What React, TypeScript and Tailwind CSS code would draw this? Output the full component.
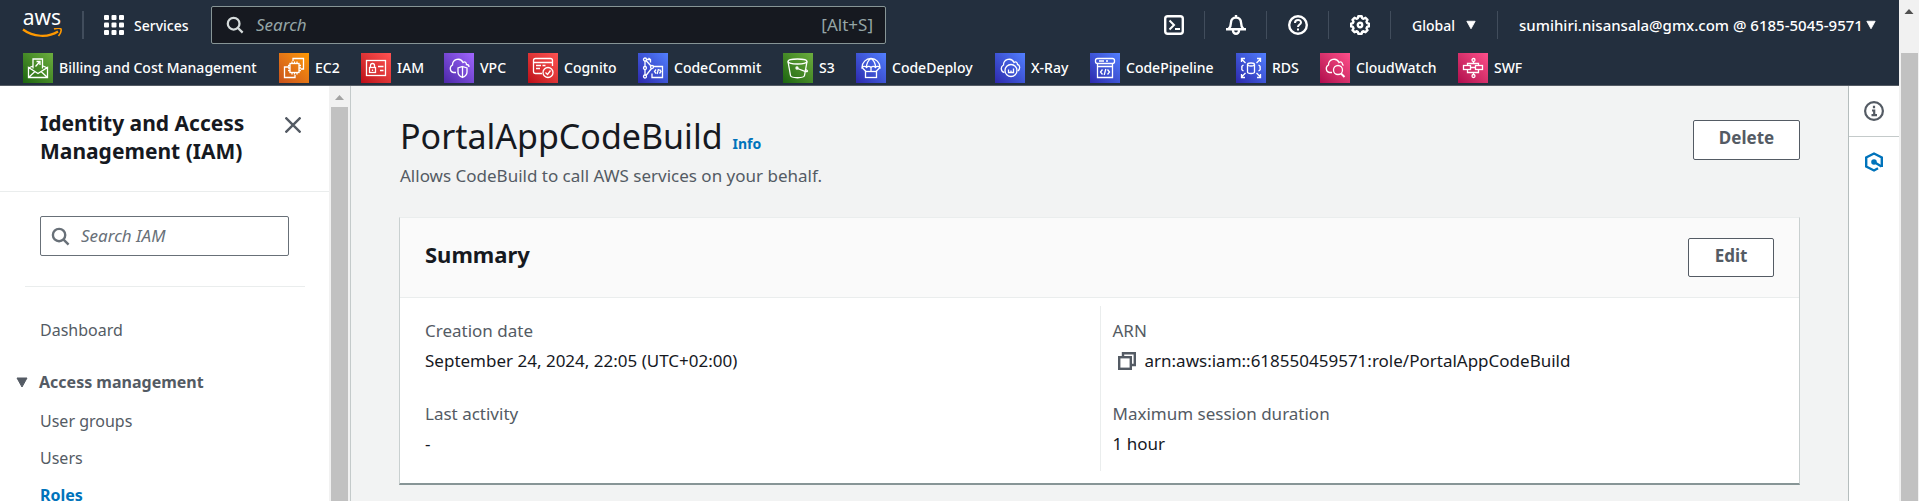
import type { ReactNode } from 'react';

type Service = { name: string; tile: string; width: string; glyph: ReactNode };

const GREEN = 'bg-linear-to-tr from-[#1b660f] to-[#6cae3e]';
const ORANGE = 'bg-linear-to-tr from-[#c8511b] to-[#ff9900]';
const RED = 'bg-linear-to-tr from-[#bd0816] to-[#ff5252]';
const PURPLE = 'bg-linear-to-tr from-[#4d27a8] to-[#a166ff]';
const BLUE = 'bg-linear-to-tr from-[#2e27ad] to-[#527fff]';
const PINK = 'bg-linear-to-tr from-[#b0084d] to-[#ff4f8b]';

const services: Service[] = [
  {
    name: 'Billing and Cost Management',
    tile: GREEN,
    width: 'w-[256px]',
    glyph: (
      <>
        <path d="M10 15.5V6h9.5v9.5M5.500 14.500v10h19v-10l-9.500 6zM5.500 24.500l6.500-6M24.500 24.500l-6.500-6M10 13l-4.500 2M20 13l4.500 2" />
        <path d="M12.500 13.500l4-4.500M13.500 8.500h3.500v3.500" />
      </>
    ),
  },
  {
    name: 'EC2',
    tile: ORANGE,
    width: 'w-[82px]',
    glyph: (
      <>
        <path d="M14 8V5.500h10.500V16H22M10 14H5.500v10.500H16V22" />
        <rect x="11" y="10.500" width="9" height="9" />
        <path d="M13 8.500v2M15.500 8.500v2M18 8.500v2M13 19.500v2M15.500 19.500v2M18 19.500v2M9 12.500h2M9 15h2M9 17.500h2M20 12.500h2M20 15h2M20 17.500h2" />
      </>
    ),
  },
  {
    name: 'IAM',
    tile: RED,
    width: 'w-[83px]',
    glyph: (
      <>
        <rect x="5.500" y="7.500" width="19" height="15" />
        <rect x="8.500" y="14.500" width="6" height="5" />
        <path d="M9.500 14.500v-2a2 2 0 0 1 4 0v2M11.500 16.500v1.500M17 13.500h5.500M19 17.500h3.500" />
      </>
    ),
  },
  {
    name: 'VPC',
    tile: PURPLE,
    width: 'w-[84px]',
    glyph: (
      <>
        <path d="M12 19.500H9.500a4 4 0 0 1-1-7.500c0-6 8-8 10.500-2.500 2-1.500 3.500 0 3.500 2 1.500 0 2.500 1 2.500 2.500" />
        <path d="M18.500 13.500l4.500 1.500v4c0 2.500-2 4.500-4.500 5.500-2.500-1-4.500-3-4.500-5.500v-4zM18.500 13.500v11" />
      </>
    ),
  },
  {
    name: 'Cognito',
    tile: RED,
    width: 'w-[110px]',
    glyph: (
      <>
        <path d="M14 20.500H7.500a2 2 0 0 1-2-2v-11a2 2 0 0 1 2-2h15a2 2 0 0 1 2 2V13M5.500 9.500h19M8 12.500h5M8 15.500h4M14.500 12.500h3" />
        <circle cx="20" cy="19.500" r="5" />
        <path d="M17.500 19.500l2 2 3-4" />
      </>
    ),
  },
  {
    name: 'CodeCommit',
    tile: BLUE,
    width: 'w-[145px]',
    glyph: (
      <>
        <path d="M7 8v5.500M7 16.500v5.500M8 7.500l5 5.500M8 22.500l5.500-7M8.500 6.500h3.500M10.500 5l2 1.500v3M15 13.500h9.500v11H14v-4" />
        <circle cx="7" cy="6.500" r="1.500" />
        <circle cx="7" cy="15" r="1.500" />
        <circle cx="7" cy="23.500" r="1.500" />
        <circle cx="14" cy="14" r="1.500" />
        <path d="M18 16.500l-1.500 2 1.500 2M21.500 16.500l1.500 2-1.500 2M20.500 16l-1.400 5" />
      </>
    ),
  },
  {
    name: 'S3',
    tile: GREEN,
    width: 'w-[73px]',
    glyph: (
      <>
        <ellipse cx="14.500" cy="8.500" rx="9.500" ry="2.500" />
        <path d="M5 8.500l2.500 14c.5 3 13.500 3 14 0l2.500-14M14.500 15.500l8 3c3 .5 2.500-1-.500-2.500" />
        <circle cx="14" cy="15" r="1" />
      </>
    ),
  },
  {
    name: 'CodeDeploy',
    tile: BLUE,
    width: 'w-[139px]',
    glyph: (
      <>
        <path d="M6 14.500a9 9 0 0 1 18 0c-1.500-1.500-3.500-1.500-4.500 0-1.500-1.500-3-1.500-4.500 0-1.500-1.500-3-1.500-4.500 0-1-1.500-3-1.500-4.500 0zM10.500 14.500c0-4 1.500-7 4.500-9 3 2 4.500 5 4.500 9M6 14.500l4 4M24 14.500l-4 4M15 14.500v4" />
        <rect x="9.500" y="18.500" width="11" height="6" />
      </>
    ),
  },
  {
    name: 'X-Ray',
    tile: BLUE,
    width: 'w-[95px]',
    glyph: (
      <>
        <path d="M9.500 19.500a4 4 0 0 1-1-7.500c0-6 8-8 10.500-2.500 2-1.500 3.500 0 3.500 2 2.500.5 3 4 .500 6.500" />
        <circle cx="16" cy="17.500" r="6" />
        <path d="M13.500 16.500v3h5v-4M16 17.500v2" />
      </>
    ),
  },
  {
    name: 'CodePipeline',
    tile: BLUE,
    width: 'w-[146px]',
    glyph: (
      <>
        <rect x="5.500" y="5.500" width="19" height="5" rx="2" />
        <path d="M7.500 10.500v14h15v-14M7.500 13.500h15M9 8h5M16 8h2" />
        <path d="M12.500 16.500l-2 2.500 2 2.500M17.500 16.500l2 2.500-2 2.500M15.800 16l-1.600 6" />
      </>
    ),
  },
  {
    name: 'RDS',
    tile: BLUE,
    width: 'w-[84px]',
    glyph: (
      <>
        <ellipse cx="15" cy="11.500" rx="3.500" ry="1.500" />
        <path d="M11.500 11.500v7.500c0 2 7 2 7 0v-7.500M9.500 10l-4-4M5.500 9V5.500H9M20.500 10l4-4M24.500 9V5.500H21M9.500 20l-4 4M5.500 21v3.500H9M20.500 20l4 4M24.500 21v3.500H21M7.500 12c-2 1-2 2-1.500 3-.5 1-.5 2 1.500 3M22.500 12c2 1 2 2 1.500 3 .5 1 .5 2-1.500 3" />
      </>
    ),
  },
  {
    name: 'CloudWatch',
    tile: PINK,
    width: 'w-[138px]',
    glyph: (
      <>
        <path d="M12 19.500H9.500a4 4 0 0 1-1-7.500c0-6 8-8 10.500-2.500 2-1.500 3.500 0 3.500 2l1 1" />
        <circle cx="18" cy="17" r="4.500" />
        <path d="M21 20.500l3.500 3.500" strokeWidth="2" />
      </>
    ),
  },
  {
    name: 'SWF',
    tile: PINK,
    width: 'w-[80px]',
    glyph: (
      <>
        <circle cx="15.500" cy="7" r="1.500" />
        <circle cx="15.500" cy="23" r="1.500" />
        <rect x="5.500" y="12.500" width="7" height="4" />
        <rect x="17.500" y="12.500" width="7" height="4" />
        <path d="M15.500 8.500V10.500M9.500 12.500v-2h11v2M9.500 16.500v3h11v-3M15.500 19.500v2M12.500 14.500h5" />
      </>
    ),
  },
];

function SearchIcon({ className }: { className: string }) {
  return (
    <svg viewBox="0 0 20 20" className={className} fill="none" stroke="currentColor" strokeWidth="2.500" aria-hidden="true">
      <circle cx="8.500" cy="8.500" r="6.500" />
      <path d="M13 13l5.500 5.500" />
    </svg>
  );
}

function Caret({ className }: { className: string }) {
  return (
    <svg viewBox="0 0 12 10" className={className} fill="currentColor" aria-hidden="true">
      <path d="M1 .5h10L6 9.500z" stroke="currentColor" strokeLinejoin="round" />
    </svg>
  );
}

function Divider() {
  return <span className="h-7 w-px shrink-0 bg-[#414d5c]" />;
}

function HeaderIcon({ label, children }: { label: string; children: ReactNode }) {
  return (
    <button aria-label={label} className="flex w-[61px] shrink-0 justify-center">
      <svg viewBox="0 0 20 20" className="size-5" fill="none" stroke="currentColor" strokeWidth="2.400">
        {children}
      </svg>
    </button>
  );
}

function Header() {
  return (
    <header className="shrink-0 border-b border-[#545b64] bg-[#232f3e] text-[14px] font-medium text-white">
      <div className="flex h-[50px] items-center">
        <a href="#home" aria-label="AWS home" className="ml-[22px] flex w-10 shrink-0 flex-col items-center">
          <span className="mb-1.5 text-[21px] leading-[10px] font-normal">aws</span>
          <svg viewBox="0 0 40 10" className="h-[10px] w-10" fill="none" stroke="#ff9900" aria-hidden="true">
            <path d="M1 1.500c10 7.500 25 8.500 35 2" strokeWidth="2.200" />
            <path d="M32 1c3-1 6-1 7 0 .5 1.500-.5 4.500-2.500 7" strokeWidth="1.600" />
          </svg>
        </a>
        <span className="ml-5 h-7 w-0.5 shrink-0 bg-[#414d5c]" />
        <button className="ml-5 flex shrink-0 items-center gap-[10px]">
          <svg viewBox="0 0 20 20" className="size-5" fill="currentColor" aria-hidden="true">
            {[0, 7.5, 15].map((y) => [0, 7.5, 15].map((x) => <rect key={`${x}-${y}`} x={x} y={y} width="5" height="5" rx="1" />))}
          </svg>
          <span className="w-[56px] text-left">Services</span>
        </button>
        <label className="ml-[21px] flex h-[38px] w-[675px] items-center rounded-[2px] border border-[#879596] bg-[#161920] pr-3 pl-[14px] text-[17px] font-normal">
          <SearchIcon className="size-[18px] shrink-0 text-[#d5dbdb]" />
          <input
            type="text"
            aria-label="Search services"
            placeholder="Search"
            className="ml-3 min-w-0 flex-1 bg-transparent outline-none placeholder:text-[#95a5a6] placeholder:italic"
          />
          <span className="text-[#95a5a6]">[Alt+S]</span>
        </label>
        <div className="ml-auto flex shrink-0 items-center pr-[23px]">
          <HeaderIcon label="CloudShell">
            <rect x="1.200" y="1.200" width="17.600" height="17.600" rx="2.500" />
            <path d="M5.500 5.500L10 10l-4.500 4.500M11 14h5" strokeWidth="2" />
          </HeaderIcon>
          <Divider />
          <HeaderIcon label="Notifications">
            <path d="M0 14.200h20M2.500 14c2-2 2.500-3.500 2.500-6.500a5 5 0 0 1 10 0c0 3 .5 4.500 2.500 6.500M10 0v3" />
            <path d="M7 15v.800a3 3 0 0 0 6 0V15" />
          </HeaderIcon>
          <Divider />
          <HeaderIcon label="Support">
            <circle cx="10" cy="10" r="8.800" />
            <path d="M7 8c0-4 6-4 6-.500 0 2-3 2-3 4.500M10 13.500v2" strokeWidth="2" />
          </HeaderIcon>
          <Divider />
          <HeaderIcon label="Settings">
            <path d="M8.300 1.200h3.400l.5 2 1.300.6 2-1 2 2-1 2 .6 1.300 1.800.5v2.800l-1.800.5-.6 1.300 1 2-2 2-2-1-1.300.6-.5 2H8.300l-.5-2-1.300-.6-2 1-2-2 1-2-.6-1.300-1.800-.5V8.600l1.800-.5.6-1.300-1-2 2-2 2 1 1.300-.6z" strokeLinejoin="round" />
            <circle cx="10" cy="10" r="2.200" />
          </HeaderIcon>
          <Divider />
          <button className="ml-[21px] flex w-[64px] items-center justify-between">
            Global
            <Caret className="h-[10px] w-[10px]" />
          </button>
          <span className="ml-[21px] h-7 w-px bg-[#414d5c]" />
          <button className="ml-[21px] flex w-[357px] items-center justify-between text-[15px] whitespace-nowrap">
            sumihiri.nisansala@gmx.com @ 6185-5045-9571
            <Caret className="h-[10px] w-[10px]" />
          </button>
        </div>
      </div>
      <nav aria-label="Favorites" className="flex h-[35px] items-center pl-[23px]">
        {services.map((s) => (
          <a key={s.name} href="#service" className={`flex shrink-0 items-center gap-1.5 whitespace-nowrap ${s.width}`}>
            <span className={`size-[30px] shrink-0 ${s.tile}`}>
              <svg viewBox="0 0 30 30" className="size-full" fill="none" stroke="white" strokeWidth="1.300" aria-hidden="true">
                {s.glyph}
              </svg>
            </span>
            {s.name}
          </a>
        ))}
      </nav>
    </header>
  );
}

function Sidebar() {
  return (
    <aside className="flex w-[351px] shrink-0 border-r border-[#c4caca] bg-white">
      <div className="min-w-0 flex-1">
        <div className="flex h-[106px] items-start justify-between border-b border-[#eaeded] pt-[23px] pr-7 pl-10">
          <h2 className="text-[21px] leading-7 font-bold whitespace-nowrap text-[#16191f]">
            Identity and Access
            <br />
            Management (IAM)
          </h2>
          <button aria-label="Close" className="mt-2 text-[#545b64]">
            <svg viewBox="0 0 16 16" className="size-4" stroke="currentColor" strokeWidth="2.400">
              <path d="M.5.5l15 15M15.500.5l-15 15" />
            </svg>
          </button>
        </div>
        <div className="mr-6 ml-[25px] border-b border-[#eaeded] pt-6 pr-4 pb-[30px] pl-[15px]">
          <label className="flex h-10 items-center rounded-[2px] border border-[#687078] pl-[10px] text-[#687078]">
            <SearchIcon className="size-[19px] shrink-0" />
            <input
              type="text"
              aria-label="Search IAM"
              placeholder="Search IAM"
              className="ml-[11px] min-w-0 flex-1 bg-transparent text-[17px] outline-none placeholder:text-[#687078] placeholder:italic"
            />
          </label>
        </div>
        <nav aria-label="IAM" className="pt-[31px] pl-10 text-[16px] leading-6 text-[#545b64]">
          <a href="#dashboard" className="block">Dashboard</a>
          <button className="mt-7 -ml-6 flex items-center gap-[11px] font-bold">
            <Caret className="h-[11px] w-3" />
            Access management
          </button>
          <ul className="mt-[15px] flex flex-col gap-[13px]">
            <li><a href="#groups">User groups</a></li>
            <li><a href="#users">Users</a></li>
            <li><a href="#roles" className="font-bold text-[#0073bb]">Roles</a></li>
          </ul>
        </nav>
      </div>
      <div className="flex w-[21px] shrink-0 flex-col items-center bg-[#f1f1f1]" aria-hidden="true">
        <svg viewBox="0 0 21 21" className="size-[21px] shrink-0" fill="#a3a3a3">
          <path d="M6 14h9L10.500 9z" />
        </svg>
        <span className="w-[17px] flex-1 bg-[#c1c1c1]" />
      </div>
    </aside>
  );
}

function Field({ label, children }: { label: string; children: ReactNode }) {
  return (
    <div className="text-[17px] leading-[30px]">
      <dt className="text-[#545b64]">{label}</dt>
      <dd className="text-[#16191f]">{children}</dd>
    </div>
  );
}

function Content() {
  return (
    <main className="min-w-0 flex-1 px-12 pt-[30px]">
      <div className="flex items-start justify-between pl-px">
        <div>
          <h1 className="flex items-baseline gap-[10px] text-[34px] leading-10 text-[#16191f]">
            PortalAppCodeBuild
            <a href="#info" className="text-[14px] leading-5 font-bold text-[#0073bb]">Info</a>
          </h1>
          <p className="mt-1.5 text-[17px] leading-7 text-[#545b64]">Allows CodeBuild to call AWS services on your behalf.</p>
        </div>
        <button className="mt-1 h-10 w-[107px] rounded-[2px] border border-[#545b64] bg-white pb-1 text-[17px] font-bold text-[#545b64]">
          Delete
        </button>
      </div>
      <section className="mt-[27px] border-x border-t border-b-2 border-x-[#c9d0d0] border-t-[#eaeded] border-b-[#879596] bg-white">
        <div className="flex h-20 items-center justify-between border-b border-[#eaeded] bg-[#fafafa] px-[25px]">
          <h2 className="pb-1.5 text-[22px] font-bold text-[#16191f]">Summary</h2>
          <button className="h-[39px] w-[86px] rounded-[2px] border border-[#545b64] bg-white pb-1 text-[17px] font-bold text-[#545b64]">
            Edit
          </button>
        </div>
        <dl className="grid grid-cols-2 pt-2 pb-3">
          <div className="flex flex-col gap-[23px] pt-2.5 pb-3 pl-[25px]">
            <Field label="Creation date">September 24, 2024, 22:05 (UTC+02:00)</Field>
            <Field label="Last activity">-</Field>
          </div>
          <div className="flex flex-col gap-[23px] border-l border-[#eaeded] pt-2.5 pb-3 pl-3">
            <Field label="ARN">
              <span className="flex items-center gap-[9px]">
                <button aria-label="Copy ARN" className="ml-[5px] text-[#545b64]">
                  <svg viewBox="0 0 18 18" className="size-[18px]" fill="none" stroke="currentColor" strokeWidth="2.400">
                    <path d="M5 5V1.200h11.800V13h-4" />
                    <rect x="1.200" y="5.200" width="11.600" height="11.600" />
                  </svg>
                </button>
                arn:aws:iam::618550459571:role/PortalAppCodeBuild
              </span>
            </Field>
            <Field label="Maximum session duration">1 hour</Field>
          </div>
        </dl>
      </section>
    </main>
  );
}

function ToolRail() {
  return (
    <aside className="w-[51px] shrink-0 border-l border-[#b5bdbd] bg-white">
      <button aria-label="Info panel" className="flex h-[51px] w-full items-center justify-center border-b border-[#c4caca] text-[#545b64]">
        <svg viewBox="0 0 20 20" className="size-5" fill="none" stroke="currentColor" strokeWidth="2.200">
          <circle cx="10" cy="10" r="8.900" />
          <path d="M10 4.800v2.400M8 9.500h2.200V14M7.500 14.200h5.500" />
        </svg>
      </button>
      <button aria-label="Amazon Q" className="flex h-[49px] w-full items-center justify-center text-[#0073bb]">
        <svg viewBox="0 0 20 20" className="size-5" fill="none" stroke="currentColor" strokeWidth="2.400">
          <path d="M17.800 15V5.500L10 1.500 2.200 5.500v9l7.800 4 4-2.300" />
          <circle cx="10" cy="10" r="1.600" fill="currentColor" />
          <path d="M10 10l7.500 4.500" />
        </svg>
      </button>
    </aside>
  );
}

export default function App() {
  return (
    <div className="flex h-screen overflow-hidden bg-[#f2f3f3] font-['Noto_Sans',sans-serif]">
      <div className="flex min-w-0 flex-1 flex-col">
        <Header />
        <div className="flex min-h-0 flex-1">
          <Sidebar />
          <Content />
          <ToolRail />
        </div>
      </div>
      <div className="flex w-5 shrink-0 flex-col items-center bg-[#f1f1f1]" aria-hidden="true">
        <svg viewBox="0 0 20 53" className="h-[53px] w-5 shrink-0" fill="#505050">
          <path d="M5.500 14h9L10 9z" />
        </svg>
        <span className="w-[17px] flex-1 bg-[#c1c1c1]" />
      </div>
    </div>
  );
}
